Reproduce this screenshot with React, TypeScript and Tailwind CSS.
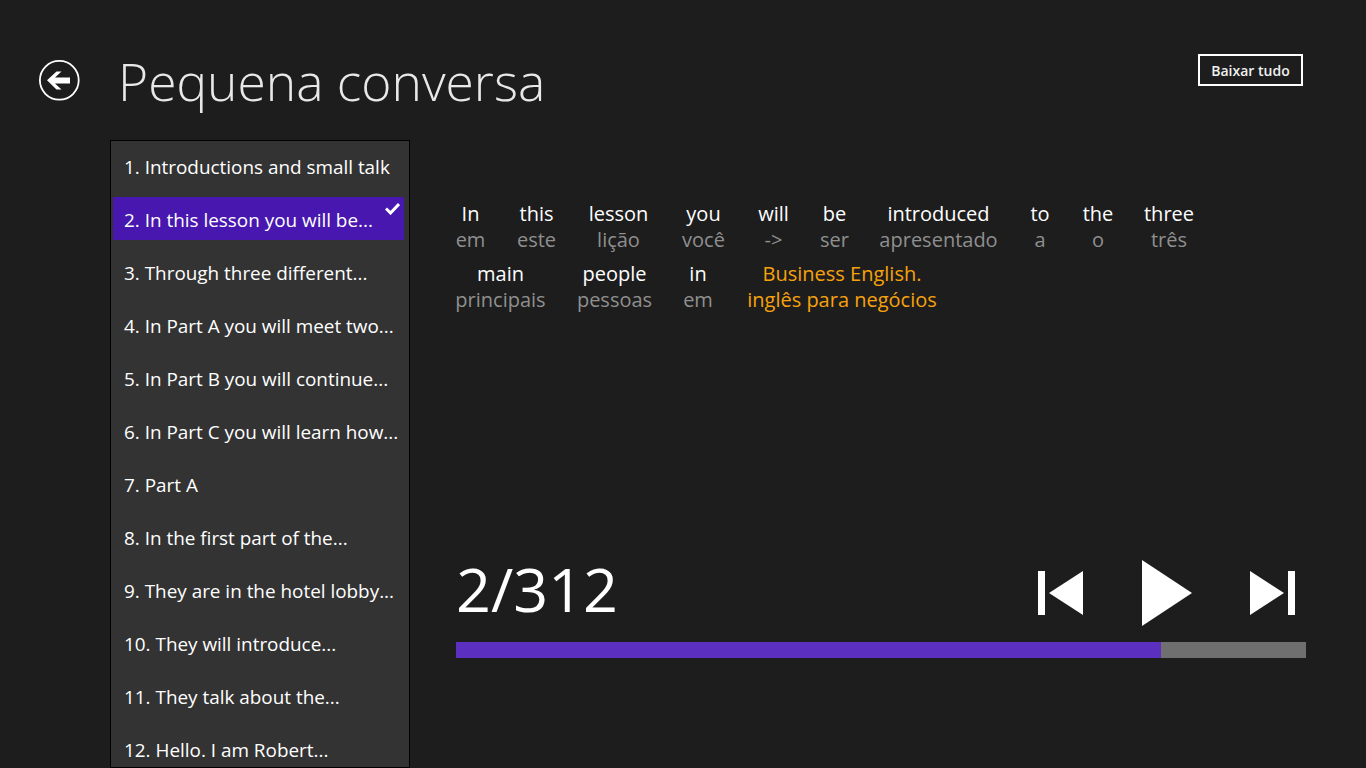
const items = [
  "1. Introductions and small talk",
  "2. In this lesson you will be...",
  "3. Through three different...",
  "4. In Part A you will meet two...",
  "5. In Part B you will continue...",
  "6. In Part C you will learn how...",
  "7. Part A",
  "8. In the first part of the...",
  "9. They are in the hotel lobby...",
  "10. They will introduce...",
  "11. They talk about the...",
  "12. Hello. I am Robert...",
];

type W = { en: string; pt: string; w: number; hl?: boolean };
const row1: W[] = [
  { en: "In", pt: "em", w: 29 },
  { en: "this", pt: "este", w: 38 },
  { en: "lesson", pt: "lição", w: 61 },
  { en: "you", pt: "você", w: 44 },
  { en: "will", pt: "->", w: 31 },
  { en: "be", pt: "ser", w: 26 },
  { en: "introduced", pt: "apresentado", w: 117 },
  { en: "to", pt: "a", w: 21 },
  { en: "the", pt: "o", w: 30 },
  { en: "three", pt: "três", w: 47 },
];
const row2: W[] = [
  { en: "main", pt: "principais", w: 89 },
  { en: "people", pt: "pessoas", w: 74 },
  { en: "in", pt: "em", w: 28 },
  { en: "Business English.", pt: "inglês para negócios", w: 195, hl: true },
];

function Row({ words }: { words: W[] }) {
  return (
    <div className="flex gap-[32.5px] h-[60px]">
      {words.map((x, i) => (
        <div key={i} className="flex flex-col items-center" style={{ width: x.w }}>
          <span className={`whitespace-nowrap h-[26px] leading-[26px] ${x.hl ? "text-[#f7a20c]" : "text-white"}`}>{x.en}</span>
          <span className={`whitespace-nowrap h-[26px] leading-[26px] ${x.hl ? "text-[#f7a20c]" : "text-[#8f8f8f]"}`}>{x.pt}</span>
        </div>
      ))}
    </div>
  );
}

export default function App() {
  return (
    <div className="w-[1366px] h-[768px] overflow-hidden bg-[#1d1d1d] text-white font-['Open_Sans','Liberation_Sans',sans-serif]">
      <header className="h-[140px] flex items-start">
        <svg className="ml-[39px] mt-[60px] shrink-0" width="41" height="41" viewBox="0 0 41 41">
          <circle cx="20.3" cy="20.3" r="19.4" fill="none" stroke="white" strokeWidth="1.8" />
          <path d="M8 20.3 L17.5 11.5 H22.5 L16 17.5 H31 V23.5 H16 L22.5 29.5 H17.5 Z" fill="white" />
        </svg>
        <h1 className="ml-[38px] mt-[45px] text-[51.5px] leading-[72px] font-light text-[#e8e8e8] whitespace-nowrap">Pequena conversa</h1>
        <button className="ml-auto mr-[63px] mt-[54px] w-[105px] h-[32px] border-2 border-white text-[14px] font-semibold text-[#f0f0f0] flex items-center justify-center">Baixar tudo</button>
      </header>
      <div className="flex h-[628px]">
        <ul className="ml-[110px] w-[300px] h-[628px] overflow-hidden bg-[#333333] border border-black pl-[2px] pr-[5px] pt-[3px] shrink-0">
          {items.map((t, i) => (
            <li key={i} className={`relative h-[43px] mb-[10px] pl-[11px] pt-[4px] flex items-center text-[18.9px] whitespace-nowrap ${i === 1 ? "bg-[#4717b0]" : ""}`}>
              {t}
              {i === 1 && (
                <svg className="absolute right-[4px] top-[5px]" width="15" height="13" viewBox="0 0 15 13">
                  <path d="M1 6.5 L5.5 11 L14 2" fill="none" stroke="white" strokeWidth="3" />
                </svg>
              )}
            </li>
          ))}
        </ul>
        <main className="ml-[46px] w-[850px] flex flex-col">
          <div className="mt-[61px] text-[20px]">
            <Row words={row1} />
            <Row words={row2} />
          </div>
          <div className="mt-[239px] h-[81px] flex items-start justify-between">
            <div className="-mt-[13px] text-[61px] leading-[84px]">2/312</div>
            <div className="flex items-start mr-[11px]">
              <svg className="mt-[11px]" width="45" height="44" viewBox="0 0 45 44">
                <rect x="0" y="0" width="7" height="44" fill="white" />
                <polygon points="11,22 45,0 45,44" fill="white" />
              </svg>
              <svg className="ml-[59px]" width="50" height="66" viewBox="0 0 50 66">
                <polygon points="0,0 50,33 0,66" fill="white" />
              </svg>
              <svg className="ml-[58px] mt-[11px]" width="45" height="44" viewBox="0 0 45 44">
                <polygon points="0,0 34,22 0,44" fill="white" />
                <rect x="38" y="0" width="7" height="44" fill="white" />
              </svg>
            </div>
          </div>
          <div className="mt-[1px] h-[16px] bg-[#6f6f6f]">
            <div className="h-full w-[705px] bg-[#5b2fc0]" />
          </div>
        </main>
      </div>
    </div>
  );
}
